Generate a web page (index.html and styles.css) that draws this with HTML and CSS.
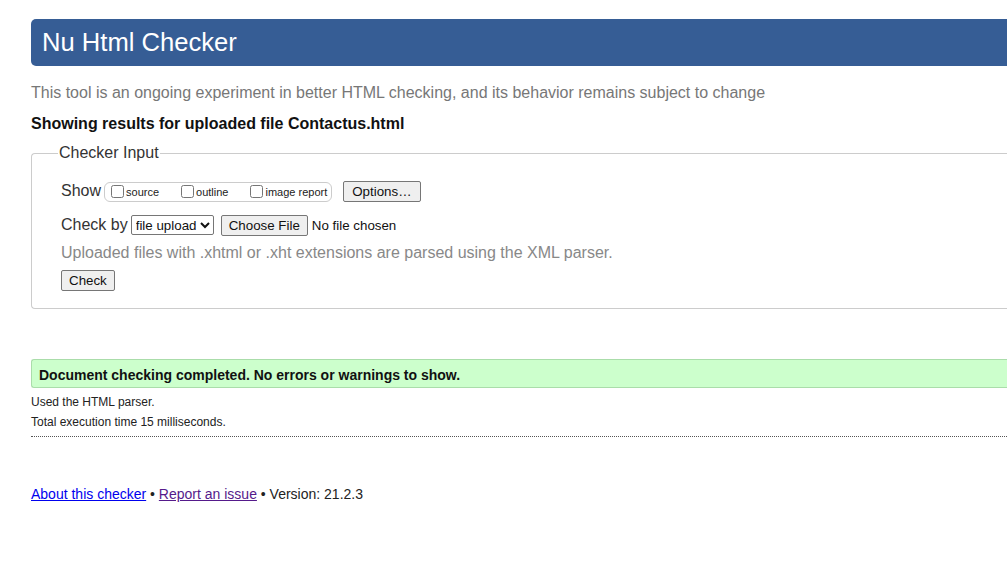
FILE: index.html
```html
<!DOCTYPE html>
<html lang="en">
<head>
<meta charset="utf-8">
<title>Nu Html Checker</title>
<link rel="stylesheet" href="styles.css">
</head>
<body>
<div class="page">
  <h1 class="title">Nu Html Checker</h1>
  <p class="intro">This tool is an ongoing experiment in better HTML checking, and its behavior remains subject to change</p>
  <p class="showing">Showing results for uploaded file Contactus.html</p>
  <fieldset class="input">
    <legend>Checker Input</legend>
    <div class="row">
      <span class="lbl">Show</span>
      <span class="show-box">
        <label class="chk"><input type="checkbox">source</label>
        <label class="chk"><input type="checkbox">outline</label>
        <label class="chk"><input type="checkbox">image report</label>
      </span>
      <button class="btn opts" type="button">Options…</button>
    </div>
    <div class="row row2">
      <span class="lbl">Check by</span>
      <select class="sel"><option>file upload</option></select>
      <span class="file"><button class="btn choose" type="button">Choose File</button><span class="nofile">No file chosen</span></span>
    </div>
    <p class="note">Uploaded files with .xhtml or .xht extensions are parsed using the XML parser.</p>
    <button class="btn check" type="button">Check</button>
  </fieldset>
  <div class="success">Document checking completed. No errors or warnings to show.</div>
  <p class="small first">Used the HTML parser.</p>
  <p class="small">Total execution time 15 milliseconds.</p>
  <hr class="dots">
  <p class="footer"><a href="#" class="about">About this checker</a> • <a href="#" class="report">Report an issue</a> • Version: 21.2.3</p>
</div>
</body>
</html>
```

FILE: styles.css
```css
html, body {
  margin: 0;
  padding: 0;
  overflow: hidden;
  background: #fff;
}
body {
  font-family: "Liberation Sans", Arial, sans-serif;
  color: #222;
}
.page {
  width: 1060px;
  padding: 19px 0 0 31px;
}
.title {
  margin: 0;
  height: 47px;
  box-sizing: border-box;
  padding: 8px 0 0 11px;
  background: #365d95;
  color: #fff;
  font-weight: normal;
  font-size: 25.6px;
  line-height: 31px;
  border-radius: 5px 0 0 5px;
}
.intro {
  margin: 18px 0 0 0;
  font-size: 16px;
  line-height: 18px;
  color: #777;
}
.showing {
  margin: 13px 0 0 0;
  font-size: 16px;
  line-height: 18px;
  font-weight: bold;
  color: #111;
}
.input {
  margin: 11px 0 0 0;
  padding: 17px 0 17px 29px;
  border: 1px solid #ccc;
  border-radius: 4px 0 0 4px;
  border-right: none;
}
.input legend {
  padding: 0 1px;
  margin-left: -3px;
  font-size: 16px;
  color: #333;
}
.row {
  display: flex;
  align-items: center;
  height: 24px;
  font-size: 16px;
}
.row2 {
  margin-top: 10px;
}
.lbl {
  color: #333;
  margin-right: 3px;
}
.show-box {
  display: inline-flex;
  align-items: center;
  height: 18px;
  border: 1px solid #ccc;
  border-radius: 6px;
  padding: 0 4px 0 5px;
  margin-top: 1px;
}
.chk {
  display: inline-flex;
  align-items: center;
  font-size: 11px;
  color: #222;
  margin-right: 21px;
}
.chk:last-child {
  margin-right: 0;
}
.chk input {
  margin: 0 2px 0 1px;
  width: 13px;
  height: 13px;
}
.btn {
  font-family: "Liberation Sans", Arial, sans-serif;
  font-size: 13.33px;
  color: #111;
  background: #efefef;
  border: 1px solid #767676;
  border-radius: 2px;
  padding: 1px 7px;
  height: 21px;
}
.opts {
  margin-left: 11px;
  padding: 1px 8px;
}
.sel {
  font-family: "Liberation Sans", Arial, sans-serif;
  font-size: 13.33px;
  height: 20px;
  border: 1px solid #767676;
  border-radius: 2px;
  background: #fff;
  color: #111;
  margin-right: 7px;
}
.file {
  display: inline-flex;
  align-items: center;
  font-size: 13.33px;
  color: #111;
}
.choose {
  margin-right: 4px;
}
.note {
  margin: 7px 0 0 0;
  font-size: 16px;
  line-height: 18px;
  color: #888;
}
.check {
  margin-top: 8px;
}
.success {
  margin-top: 50px;
  height: 29px;
  box-sizing: border-box;
  border: 1px solid #aaddaa;
  border-right: none;
  border-radius: 3px 0 0 3px;
  background: #ccffcc;
  padding: 7px 0 0 7px;
  font-size: 14px;
  line-height: 16px;
  font-weight: bold;
  color: #111;
}
.small {
  margin: 6px 0 0 0;
  font-size: 12px;
  line-height: 14px;
  color: #222;
}
.small.first {
  margin-top: 7px;
}
.dots {
  margin: 7px 0 0 0;
  border: none;
  border-top: 1px dotted #555;
  height: 0;
}
.footer {
  margin: 49px 0 0 0;
  font-size: 14px;
  line-height: 16px;
  color: #222;
}
.about {
  color: #0000ee;
}
.report {
  color: #551a8b;
}
```
